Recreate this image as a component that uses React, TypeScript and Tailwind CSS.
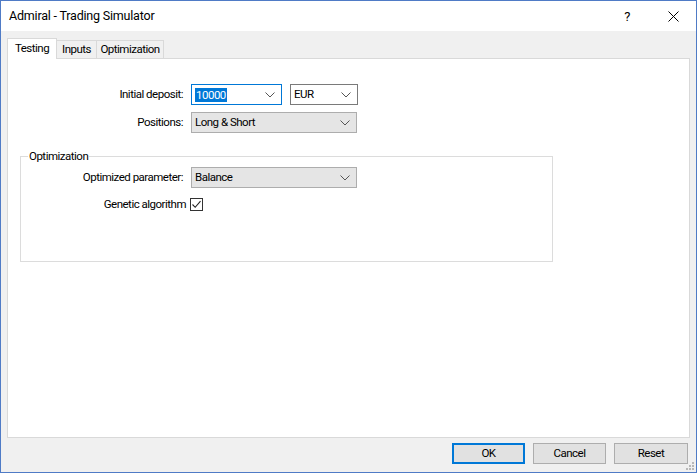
import React from "react";

const FONT = { fontFamily: 'Roboto, "Liberation Sans", Arial, sans-serif' };

function Chevron() {
  return (
    <svg width="10" height="6" viewBox="0 0 10 6" className="shrink-0">
      <polyline points="0.5,0.5 5,5 9.5,0.5" fill="none" stroke="#555" strokeWidth="1" />
    </svg>
  );
}

function Combo({
  children,
  variant,
  width,
}: {
  children: React.ReactNode;
  variant: "edit" | "white" | "gray";
  width: string;
}) {
  const cls =
    variant === "edit"
      ? "bg-white border-[#0078d7]"
      : variant === "white"
      ? "bg-white border-[#7a7a7a]"
      : "bg-[#e5e5e5] border-[#adadad]";
  return (
    <div className={`${width} h-[21px] border ${cls} flex items-center pl-[3px] pr-[6px]`}>
      <div className="flex-1 flex items-center">{children}</div>
      <Chevron />
    </div>
  );
}

export default function App() {
  return (
    <div
      className="relative w-[697px] h-[473px] border border-[#4f7bc6] bg-[#f0f0f0] flex flex-col text-[11.5px] tracking-[-0.5px] text-black overflow-hidden"
      style={FONT}
    >
      {/* Title bar */}
      <div className="h-[30px] bg-white flex items-center pl-[8px] shrink-0">
        <div className="flex-1 text-[12.5px] tracking-[-0.2px] leading-none">Admiral - Trading Simulator</div>
        <div className="w-[46px] flex justify-center text-[13px] leading-none">?</div>
        <div className="w-[46px] flex justify-center">
          <svg width="11" height="11" viewBox="0 0 11 11">
            <path d="M0.5 0.5 L10.5 10.5 M10.5 0.5 L0.5 10.5" stroke="#000" strokeWidth="1" />
          </svg>
        </div>
      </div>

      {/* Body */}
      <div className="flex-1 flex flex-col px-[6px]">
        {/* Tabs */}
        <div className="mt-[6px] h-[21px] flex items-end">
          <div className="h-[21px] w-[50px] bg-white border border-b-0 border-[#d9d9d9] flex items-center justify-center relative z-10 mb-[-1px]">
            Testing
          </div>
          <div className="h-[18px] w-[40px] bg-[#f0f0f0] border border-l-0 border-b-0 border-[#d9d9d9] flex items-center justify-center">
            Inputs
          </div>
          <div className="h-[18px] w-[67px] bg-[#f0f0f0] border border-l-0 border-b-0 border-[#d9d9d9] flex items-center justify-center">
            Optimization
          </div>
        </div>

        {/* Panel */}
        <div className="h-[380px] bg-white border border-[#d9d9d9] flex flex-col">
          <div className="mt-[25px] flex items-center">
            <div className="w-[175px] text-right">Initial deposit:</div>
            <div className="ml-[8px] flex gap-[8px]">
              <Combo variant="edit" width="w-[91px]">
                <span className="bg-[#0078d7] text-white leading-[14px] px-[1px]">10000</span>
              </Combo>
              <Combo variant="white" width="w-[68px]">EUR</Combo>
            </div>
          </div>
          <div className="mt-[7px] flex items-center">
            <div className="w-[175px] text-right">Positions:</div>
            <div className="ml-[8px]">
              <Combo variant="gray" width="w-[166px]">Long &amp; Short</Combo>
            </div>
          </div>

          {/* Group box */}
          <div className="mt-[23px] ml-[12px] w-[533px] h-[106px] border border-[#dcdcdc] relative">
            <div className="absolute left-[7px] top-[-8px] bg-white px-[1px] leading-[14px]">Optimization</div>
            <div className="mt-[10px] flex items-center">
              <div className="w-[162px] text-right">Optimized parameter:</div>
              <div className="ml-[8px]">
                <Combo variant="gray" width="w-[166px]">Balance</Combo>
              </div>
            </div>
            <div className="mt-[8px] flex items-center">
              <div className="w-[165px] text-right">Genetic algorithm</div>
              <div className="ml-[4px] w-[13px] h-[13px] border border-[#333] bg-white flex items-center justify-center">
                <svg width="11" height="11" viewBox="0 0 11 11">
                  <polyline points="1.5,5.5 4.2,8.3 9.5,2.2" fill="none" stroke="#222" strokeWidth="1.1" />
                </svg>
              </div>
            </div>
          </div>
        </div>

        {/* Buttons */}
        <div className="mt-[5px] flex justify-end gap-[8px] pr-[2px]">
          <button className="w-[73px] h-[21px] bg-[#e1e1e1] border-2 border-[#0078d7] flex items-center justify-center">OK</button>
          <button className="w-[73px] h-[21px] bg-[#e1e1e1] border border-[#adadad] flex items-center justify-center">Cancel</button>
          <button className="w-[74px] h-[21px] bg-[#e1e1e1] border border-[#adadad] flex items-center justify-center">Reset</button>
        </div>
      </div>

      {/* Size grip */}
      <svg className="absolute right-[1px] bottom-[1px]" width="10" height="10" viewBox="0 0 10 10">
        <rect x="7" y="1" width="2" height="2" fill="#b8b8b8" />
        <rect x="4" y="4" width="2" height="2" fill="#b8b8b8" />
        <rect x="7" y="4" width="2" height="2" fill="#b8b8b8" />
        <rect x="1" y="7" width="2" height="2" fill="#b8b8b8" />
        <rect x="4" y="7" width="2" height="2" fill="#b8b8b8" />
        <rect x="7" y="7" width="2" height="2" fill="#b8b8b8" />
      </svg>
    </div>
  );
}
